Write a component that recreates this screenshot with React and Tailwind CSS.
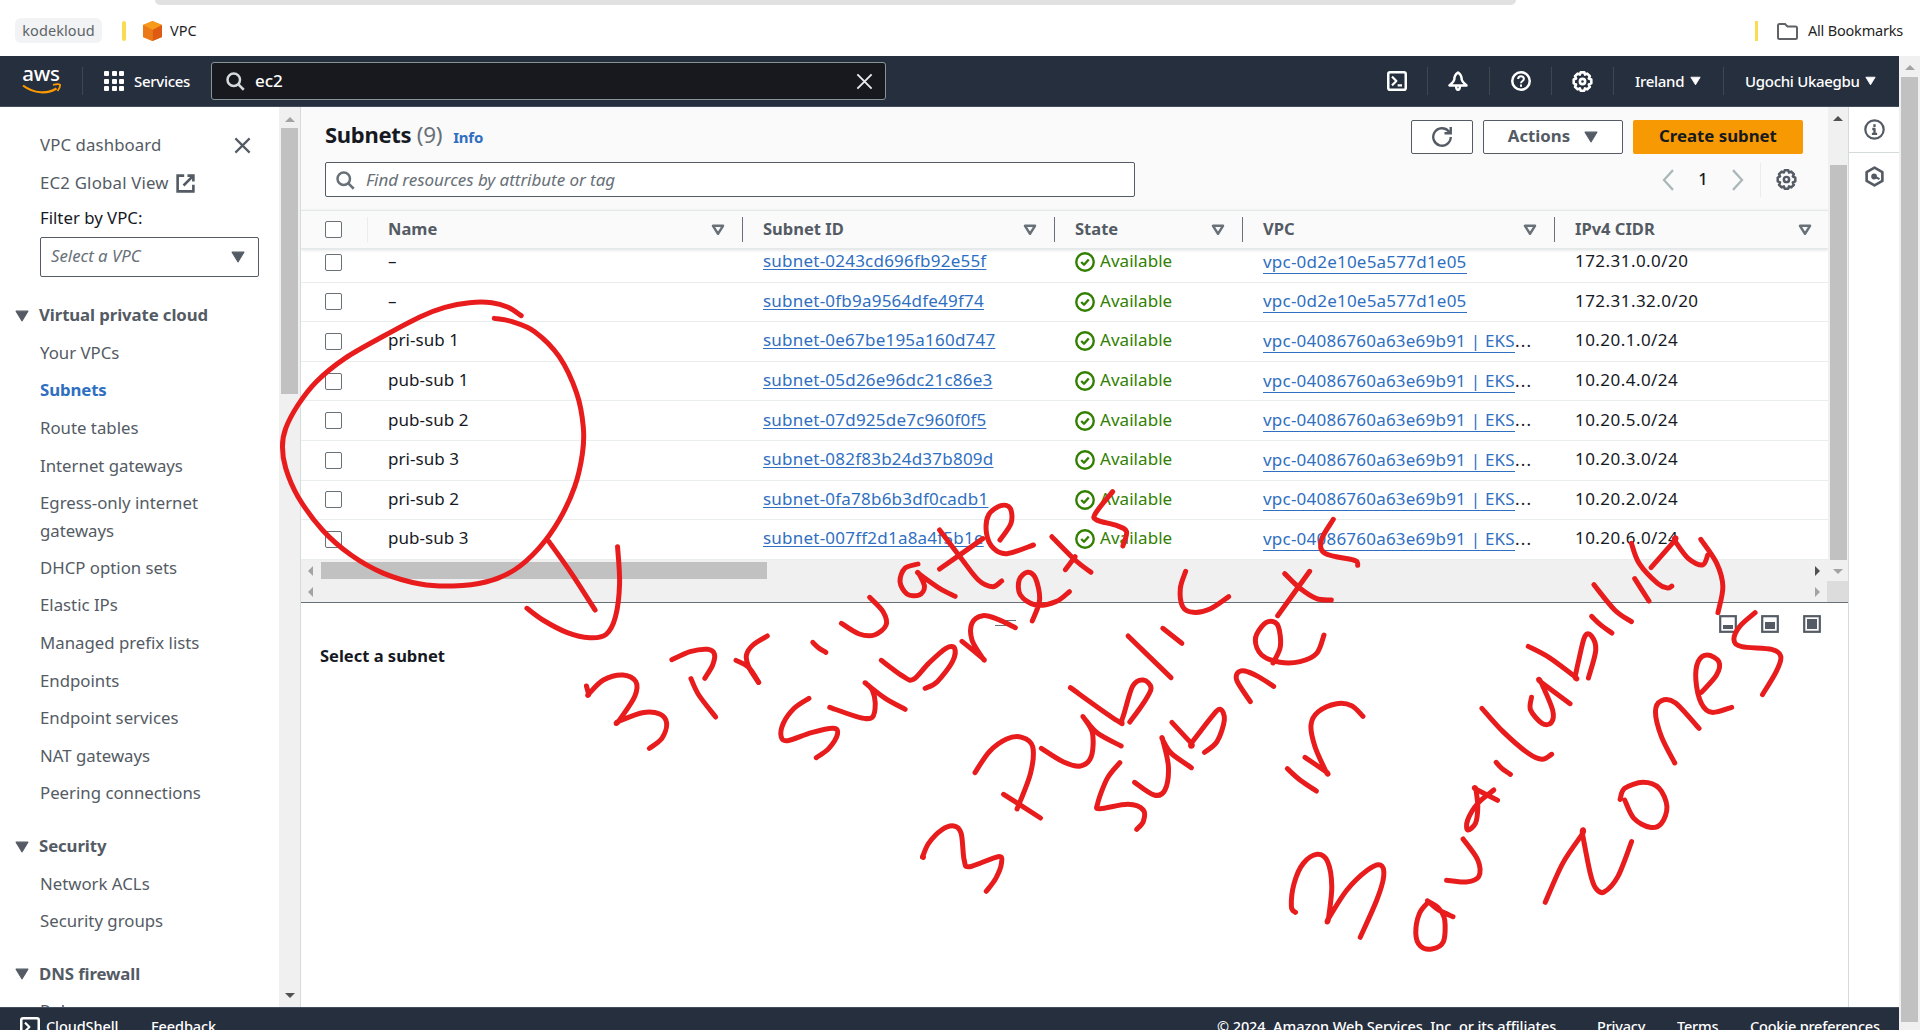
import React from "react";

/* ---------- icons (16px grid, AWS console style) ---------- */
const Svg = ({ s = 20, w = 2, children, className = "", join = "round" }) => (
  <svg width={s} height={s} viewBox="0 0 16 16" fill="none" stroke="currentColor" strokeWidth={w} strokeLinejoin={join} className={"shrink-0 " + className}>
    {children}
  </svg>
);
const SearchIcon = (p) => (
  <Svg {...p}><circle cx="7" cy="7" r="5" /><path d="m15 15-4.5-4.5" /></Svg>
);
const CloseIcon = (p) => (
  <Svg {...p}><path d="m2 2 12 12M14 2 2 14" /></Svg>
);
const ShellIcon = (p) => (
  <Svg {...p}><rect x="1" y="1" width="14" height="14" rx="1.5" /><path d="m4 4.5 3.5 3.5L4 11.5M8.5 11.5H12" strokeWidth="1.7" /></Svg>
);
const BellIcon = (p) => (
  <Svg {...p}><path d="M8 1.2C5.600 2.800 5 4.600 5 7c-.5 2-2.200 3-3.800 4.500h13.600C13.200 10 11.500 9 11 7c0-2.400-.6-4.200-3-5.800zM6.500 12c0 4 3 4 3 0" /></Svg>
);
const HelpIcon = (p) => (
  <Svg {...p}><circle cx="8" cy="8" r="7" /><path d="M5.700 6.400c0-3 4.600-3 4.600 0C10.300 8 8 8 8 9.800M8 10.800v1.700" strokeWidth="1.6" /></Svg>
);
const GearIcon = (p) => (
  <Svg {...p}>
    <path d="M6.600 1h2.800l.5 1.700 1.700-.7 2 2-.8 1.700 1.900.8v2.900l-1.900.8.8 1.800-2 2-1.700-.8-.6 1.800H6.600L6 13.200l-1.700.8-2-2 .8-1.800L1.300 9.400V6.500l1.800-.8L2.300 4l2-2 1.700.7z" />
    <circle cx="8" cy="8" r="2" />
  </Svg>
);
const RefreshIcon = (p) => (
  <Svg {...p} join="miter"><path d="M15 8A7 7 0 1 1 13.300 3.400M15 0v5H10M14.500 4.500 11.500 1.800" /></Svg>
);
const ExternalIcon = (p) => (
  <Svg {...p} join="miter"><path d="M7 2H2v12h12V9M9.500 2H14v4.500M14 2 6.500 9.500" /></Svg>
);
const InfoIcon = (p) => (
  <Svg {...p}><circle cx="8" cy="8" r="7" /><path d="M6.300 7.600H8v3.700M6 11.300h4M8 4v2" strokeWidth="1.8" /></Svg>
);
const HexIcon = (p) => (
  <Svg {...p}><path d="M8 1.200 14 4.600v6.800L8 14.800 2 11.400V4.600z" /><circle cx="7.700" cy="8" r="1.700" fill="currentColor" strokeWidth="1" /><path d="m8 8 3.800 2" strokeWidth="1.600" /></Svg>
);
const CheckIcon = (p) => (
  <Svg {...p}><circle cx="8" cy="8" r="7" /><path d="m5 8 2.200 2.200L11 6" /></Svg>
);
const Caret = ({ w = 13, h = 11, className = "" }) => (
  <svg width={w} height={h} viewBox="0 0 13 11" className={"shrink-0 " + className}>
    <path d="M1 1h11L6.500 10z" fill="currentColor" stroke="currentColor" strokeLinejoin="round" />
  </svg>
);
const FilterCaret = () => (
  <svg width="14" height="12" viewBox="0 0 14 12" className="shrink-0 text-[#687078]">
    <path d="M2 1.800h10L7 9.800z" fill="none" stroke="currentColor" strokeWidth="2.500" strokeLinejoin="round" />
  </svg>
);
const Arrow = ({ dir, dark }) => {
  const d = { up: "M0 6 5 1l5 5z", down: "M0 2l5 5 5-5z", left: "M6 0 1 5l5 5z", right: "M2 0l5 5-5 5z" }[dir];
  return (
    <svg width={dir === "up" || dir === "down" ? 10 : 8} height={dir === "up" || dir === "down" ? 8 : 10} className="shrink-0">
      <path d={d} fill={dark ? "#505050" : "#a3a3a3"} />
    </svg>
  );
};
const PanelIcon = ({ y, x = 4 }) => (
  <svg width="18" height="18" viewBox="0 0 18 18" className="shrink-0">
    <rect x="1.200" y="1.200" width="15.600" height="15.600" fill="white" stroke="#545b64" strokeWidth="2.200" />
    <rect x={x} y={y} width={18 - 2 * x} height={14 - y} fill="#545b64" />
  </svg>
);

/* ---------- data ---------- */
const VPC_A = "vpc-0d2e10e5a577d1e05";
const VPC_B = "vpc-04086760a63e69b91 | EKS";
const rows = [
  ["–", "subnet-0243cd696fb92e55f", VPC_A, "172.31.0.0/20"],
  ["–", "subnet-0fb9a9564dfe49f74", VPC_A, "172.31.32.0/20"],
  ["pri-sub 1", "subnet-0e67be195a160d747", VPC_B, "10.20.1.0/24"],
  ["pub-sub 1", "subnet-05d26e96dc21c86e3", VPC_B, "10.20.4.0/24"],
  ["pub-sub 2", "subnet-07d925de7c960f0f5", VPC_B, "10.20.5.0/24"],
  ["pri-sub 3", "subnet-082f83b24d37b809d", VPC_B, "10.20.3.0/24"],
  ["pri-sub 2", "subnet-0fa78b6b3df0cadb1", VPC_B, "10.20.2.0/24"],
  ["pub-sub 3", "subnet-007ff2d1a8a4f5b1e", VPC_B, "10.20.6.0/24"],
];
const cols = "grid grid-cols-[67px_375px_312px_188px_312px_1fr]";

/* ---------- pen annotations ---------- */
/* Each sheet has an origin and a scale; a repeated point is a sharp corner. */
const sheets = [
  { o: [0, 300], s: [2.45, 3], strokes: [
    "1277,47 1245,22 1205,8 1150,8 1090,22 1030,50 940,108 845,175 775,245 730,315 700,385 692,440 700,505 730,590 790,690 860,765 940,820 1030,852 1110,858 1190,846 1260,810 1320,745 1370,660 1408,560 1427,460 1429,380 1413,280 1370,170 1310,95 1255,65 1211,55",
    "1345,725 1400,820 1458,930",
    "1291,925 1330,960 1390,998 1445,1013 1485,1003 1508,950 1518,850 1513,740",
  ]},
  { o: [560, 580], s: [2.306, 3], strokes: [
    "61,318 66,342 66,342 100,300 145,285 175,305 172,350 135,424 135,424 190,398 230,402 246,430 235,475 206,505",
    "258,239 300,215 340,208 356,222 352,255 334,295",
    "302,296 320,345 359,411",
    "478,168 445,195 430,225 435,260 458,307",
    "406,241 435,262 458,307",
    "583,187 596,203 613,217",
    "714,52 745,95 752,135 725,165 690,162 649,130",
    "574,355 540,385 515,430 510,470 525,482 580,458 630,445 640,462 620,505 591,533",
    "622,382 690,412 720,412 727,370 720,330 707,312 707,312 750,355 796,388",
    "741,241 790,288 815,298 850,250 890,205 910,205 905,245 870,305 842,325",
    "927,184 974,234 974,234 950,180 950,130 975,107 1010,118 1050,143",
    "836,831 850,790 880,750 908,738 925,760 932,840 945,860 1010,830 1018,850 1005,895 983,934",
    "836,831 838,832",
    "957,578 990,515 1030,477 1065,472 1090,500 1085,580 1054,687",
    "1023,643 1108,714",
    "1110,505 1160,545 1200,558 1225,530 1228,460 1209,415 1209,415 1240,460 1294,498",
    "1177,323 1285,422 1297,415 1320,320 1345,300 1363,325 1345,370 1314,426",
    "1310,168 1409,293",
    "1390,145 1434,190",
    "1291,548 1262,595 1240,670 1245,686 1310,673 1345,690 1345,725 1330,748",
    "1325,607 1370,645 1395,630 1403,560 1390,480 1390,480 1410,520 1456,563",
    "1411,427 1456,490 1456,490 1500,415 1522,388 1532,420 1515,485 1486,517",
  ]},
  { o: [560, 300], s: [2.45, 3], strokes: [
    "877,792 845,805 833,845 850,882 880,885 893,860 880,822 880,822 930,865 968,889",
    "930,690 980,770 1025,840 1060,860 1082,843",
    "930,807 1036,716",
    "1078,720 1105,670 1103,625 1080,617 1050,645 1045,700 1062,745 1095,761 1160,735",
    "1157,963 1175,900 1165,835 1145,817 1125,840 1128,885 1165,915 1215,905 1248,875",
    "1205,710 1262,780 1301,817",
    "1238,809 1262,770",
    "1354,575 1312,640 1315,660 1365,677 1388,695 1379,738",
  ]},
  { o: [1100, 460], s: [3, 3], strokes: [
    "257,334 241,385 248,440 280,457 330,447 386,410",
    "451,725 412,665 412,640 435,633 475,650 521,679",
    "519,609 541,560 535,500 512,484 485,500 466,540 485,585 540,607 600,605 650,580 672,525",
    "629,334 533,467",
    "554,341 600,385 650,416 694,420",
    "700,178 664,240 675,280 760,300 772,308 773,316",
    "562,926 600,960 649,993",
    "615,892 678,935 678,935 645,860 633,795 655,755 710,731 755,737 789,769",
  ]},
  { o: [1200, 600], s: [2.178, 3], strokes: [
    "208,937 199,920 205,850 225,790 255,763 278,785 287,860 280,955 280,955 320,870 365,810 393,795 400,830 385,900 349,1012",
    "498,905 478,940 470,1000 480,1038 505,1047 530,1025 533,960 520,925 498,905 498,905 520,930 551,950",
    "573,717 605,780 607,830 580,846 537,841",
    "640,570 605,610 583,660 583,690 600,670 605,620 601,568 601,568 648,601",
    "645,487 658,506 676,523",
    "614,325 660,395 715,460 745,478 766,463",
    "722,292 720,330 745,370 765,368 768,330 743,247 743,247 806,311",
    "715,139 760,172 817,230 817,230 825,180 838,110 852,107 862,150 846,234",
    "853,49 872,74 897,99",
    "1209,38 1175,80 1163,120 1180,140 1245,148 1265,170 1255,215 1225,284",
    "752,907 790,790 833,702 833,702 850,820 862,865 880,876 910,830 940,725",
    "915,598 925,565 965,547 1000,565 1017,620 1005,670 980,682 945,655 925,600",
    "1034,489 1005,410 992,335 1005,302 1035,308 1087,385",
    "1092,277 1125,225 1130,185 1105,165 1085,185 1080,240 1092,310 1115,337 1158,322",
  ]},
  { o: [1280, 300], s: [2.45, 3], strokes: [
    "769,854 820,930 861,965",
    "869,836 904,903",
    "861,730 880,790 925,850 950,864 960,858",
    "909,803 967,722 967,722 1000,775 1035,795 1048,765",
    "1031,718 1070,790 1085,860 1073,938",
  ]},
];

function curve({ o, s }, text) {
  const p = text.split(" ").map((q) => q.split(",").map((v, i) => o[i] + v / s[i]));
  let d = `M${p[0]}`;
  for (let i = 0; i < p.length - 1; i++) {
    const a = p[i - 1] || p[i], b = p[i], c = p[i + 1], e = p[i + 2] || c;
    d += `C${b[0] + (c[0] - a[0]) / 6},${b[1] + (c[1] - a[1]) / 6} ${c[0] - (e[0] - b[0]) / 6},${c[1] - (e[1] - b[1]) / 6} ${c[0]},${c[1]}`;
  }
  return d;
}

const Annotations = () => (
  <svg className="absolute inset-0 pointer-events-none" width="1920" height="1030" fill="none" stroke="#e81c1c" strokeWidth="5" strokeLinecap="round" strokeLinejoin="round">
    {sheets.flatMap((sh, i) => sh.strokes.map((t, j) => <path key={i + "-" + j} d={curve(sh, t)} />))}
  </svg>
);

/* ---------- page parts ---------- */
const BookmarksBar = () => (
  <div className="h-14 shrink-0 bg-white text-[14.5px] text-[#1f1f1f]">
    <div className="ml-[155px] h-[5px] w-[1361px] rounded-b-[12px] bg-[#e1e1e1]" />
    <div className="flex h-[51px] items-start pl-[15px] pr-[18px] pt-[13px]">
      <div className="flex h-[25px] w-[87px] items-center justify-center rounded-md bg-[#f1f3f4] text-[#5f6368]"><span className="tracking-[0.1px]">kodekloud</span></div>
      <div className="ml-5 mt-[3px] h-5 w-[4px] rounded-sm bg-[#fbdb52]" />
      <svg width="19" height="20" viewBox="0 0 19 20" className="ml-[17px] mt-[3px] shrink-0">
        <path d="M9.500 0 19 4v12l-9.500 4L0 16V4z" fill="#ef8216" />
        <path d="M9.500 0 19 4 9.500 9 0 4z" fill="#f79a1c" />
        <path d="M19 4v12l-9.500 4V9z" fill="#dd5b12" />
        <path d="M0 4v12l9.500 4V9z" fill="#ea7a17" />
      </svg>
      <span className="ml-[8px] mt-[2px]">VPC</span>
      <div className="ml-auto mt-[3px] h-5 w-[3px] bg-[#fbdb52]" />
      <svg width="21" height="17" viewBox="0 0 21 17" fill="none" stroke="#5f6368" strokeWidth="2" className="ml-[19px] mt-[5px] shrink-0">
        <path d="M1 2.500Q1 1 2.500 1H8l2.500 2.500h8Q20 3.500 20 5v9.500q0 1.500-1.500 1.500h-16Q1 16 1 14.500z" />
      </svg>
      <span className="ml-[10px] mt-[2px] w-[94px] whitespace-nowrap tracking-[-0.2px]">All Bookmarks</span>
    </div>
  </div>
);

const Divider = () => <div className="h-7 w-px bg-[#414750]" />;

const Header = () => (
  <header className="flex h-[51px] shrink-0 items-center border-b border-[#414d5c] bg-[#262f3e] text-[15px] text-white">
    <div className="ml-[22px] flex w-10 flex-col items-center">
      <span className="h-[17px] pr-[2px] text-[20.500px] font-medium leading-[13px] tracking-[-0.2px]">aws</span>
      <svg width="40" height="12" viewBox="0 0 40 12" fill="none" stroke="#f90" strokeWidth="2.200" className="-mt-[1px]">
        <path d="M1 2.500C12 11 26 11 34.500 5.500" />
        <path d="M31 1.800q6-1.500 7 0 .5 2.500-2.500 6.200" strokeWidth="1.800" />
      </svg>
    </div>
    <div className="ml-[20px]"><div className="h-7 w-px bg-[#414750]" /></div>
    <div className="ml-[21px] grid grid-cols-[5px_5px_5px] gap-[2.500px]">
      {Array.from({ length: 9 }, (_, i) => <i key={i} className="size-[5px] rounded-[1px] bg-white" />)}
    </div>
    <span className="ml-[10px] w-[56px] whitespace-nowrap font-medium tracking-[-0.3px]">Services</span>
    <div className="ml-[21px] flex h-[38px] w-[675px] items-center rounded-[3px] border border-[#879596] bg-[#17191e] pl-[13px] pr-[11px]">
      <SearchIcon s={20} className="text-[#d5dbdb]" />
      <span className="ml-[10px] text-[17px] font-medium">ec2</span>
      <CloseIcon s={19} w={1.600} className="ml-auto text-[#e9ebed]" />
    </div>
    <div className="ml-auto flex items-center">
      <ShellIcon /><div className="ml-5 mr-[20px]"><Divider /></div>
      <BellIcon /><div className="mx-[21px]"><Divider /></div>
      <HelpIcon /><div className="mx-5"><Divider /></div>
      <GearIcon s={21} /><div className="mx-[20px]"><Divider /></div>
      <span className="ml-[1px] w-[47px] whitespace-nowrap font-medium tracking-[-0.3px]">Ireland</span>
      <Caret w={11} h={10} className="ml-[8px]" />
      <div className="ml-[22px] mr-[21px]"><Divider /></div>
      <span className="w-[112px] whitespace-nowrap font-medium tracking-[-0.3px]">Ugochi Ukaegbu</span>
      <Caret w={11} h={10} className="ml-[8px] mr-[23px]" />
    </div>
  </header>
);

const NavItem = ({ children, active }) => (
  <div className={"flex h-[37.600px] items-center whitespace-nowrap pl-10 " + (active ? "font-bold tracking-[-0.1px] text-[#2f6fc1]" : "")}>{children}</div>
);
const NavHead = ({ children, className }) => (
  <div className={"flex h-[37.600px] items-center pl-[15px] text-[#545b64] " + className}>
    <Caret w={14} h={12} className="mr-[10px] mt-[2px]" />
    <span className="font-bold tracking-[-0.1px]">{children}</span>
  </div>
);

const Sidebar = () => (
  <aside className="flex w-[300px] shrink-0 overflow-hidden">
    <div className="w-[279px] text-[16.800px] text-[#545b64]">
      <div className="mt-[19px] flex h-[38px] items-center pl-10"><span className="tracking-[0.1px]">VPC dashboard</span><CloseIcon s={19} w={1.800} className="ml-auto mr-[27px]" /></div>
      <div className="flex h-[38px] items-center pl-10"><span className="w-[130px] whitespace-nowrap tracking-[0.2px]">EC2 Global View</span><ExternalIcon s={21} className="ml-[5px]" /></div>
      <div className="flex h-[32px] items-center pl-10 text-[#16191f]">Filter by VPC:</div>
      <div className="ml-10 mt-[3px] flex h-[40px] w-[219px] items-center rounded-[2px] border border-[#545b64] bg-white pl-[10px] pr-[13px] italic text-[#687078]">
        <span className="-mt-[3px]">Select a VPC</span><Caret w={14} h={12} className="ml-auto text-[#545b64]" />
      </div>
      <NavHead className="mt-[19px]">Virtual private cloud</NavHead>
      <NavItem>Your VPCs</NavItem>
      <NavItem active>Subnets</NavItem>
      <NavItem>Route tables</NavItem>
      <NavItem>Internet gateways</NavItem>
      <div className="pl-10 pt-[5px] leading-[28px]">Egress-only internet<br />gateways</div>
      <div className="h-[3.600px]" />
      {["DHCP option sets", "Elastic IPs", "Managed prefix lists", "Endpoints", "Endpoint services", "NAT gateways", "Peering connections"].map((t) => <NavItem key={t}>{t}</NavItem>)}
      <NavHead className="mt-[15px]">Security</NavHead>
      <NavItem>Network ACLs</NavItem>
      <NavItem>Security groups</NavItem>
      <NavHead className="mt-[15px]">DNS firewall</NavHead>
      <NavItem>Rule groups</NavItem>
    </div>
    <div className="flex w-[21px] flex-col items-center bg-[#f0f0f0]">
      <div className="flex h-[21px] items-center pt-1"><Arrow dir="up" /></div>
      <div className="h-[266px] w-[17px] bg-[#c1c1c1]" />
      <div className="mt-auto mb-[8px] flex"><Arrow dir="down" dark /></div>
    </div>
  </aside>
);

const Checkbox = () => <div className="ml-6 size-[17px] rounded-[2px] border border-[#687078] bg-white" />;

const HeadCell = ({ children, last }) => (
  <div className={"flex h-[25px] items-center border-[#687078] " + (last ? "pl-[20px] pr-[16px]" : "border-r pl-[20px] pr-[17px]")}>
    <span className="mr-auto whitespace-nowrap font-bold">{children}</span><FilterCaret />
  </div>
);

const Table = () => (
  <div className="flex h-[453px] shrink-0">
    <div className="flex w-[1527px] flex-col overflow-hidden">
      <div className="h-[103px] shrink-0 bg-[#fafafa]">
        <div className="flex h-[55px] items-center pl-6 pr-[25px] pt-[5px]">
          <h1 className="-mt-[5px] text-[22px] font-bold tracking-[-0.3px] text-[#16191f]">Subnets <span className="text-[22.500px] font-normal text-[#687078]">(9)</span></h1>
          <span className="ml-[11px] text-[15px] font-bold tracking-[-0.2px] text-[#2f6fc1]">Info</span>
          <div className="ml-auto flex h-[34px] w-[62px] items-center justify-center rounded-[2px] border border-[#545b64] bg-white text-[#545b64]"><RefreshIcon s={20} w={1.900} /></div>
          <div className="ml-[10px] flex h-[34px] w-[140px] items-center justify-center gap-[14px] rounded-[2px] border border-[#545b64] bg-white pb-[2px] text-[16.800px] font-bold text-[#545b64]">Actions<Caret w={14} h={12} className="mt-[2px]" /></div>
          <div className="ml-[10px] flex h-[34px] w-[170px] items-center justify-center rounded-[2px] bg-[#f79902] pb-[2px] text-[16.800px] font-bold text-[#16191f]">Create subnet</div>
        </div>
        <div className="flex items-center pl-6 pr-[31px]">
          <div className="flex h-[35px] w-[810px] items-center rounded-[2px] border border-[#545b64] bg-white pl-[9px] text-[#687078]">
            <SearchIcon s={20} /><span className="ml-[11px] text-[17px] italic tracking-[-0.05px]">Find resources by attribute or tag</span>
          </div>
          <svg width="13" height="22" viewBox="0 0 13 20" preserveAspectRatio="none" fill="none" stroke="#aab7b8" strokeWidth="2.200" className="ml-auto"><path d="M11 1 2 10l9 9" /></svg>
          <span className="w-[56px] text-center text-[16.500px] font-medium text-[#16191f]">1</span>
          <svg width="13" height="22" viewBox="0 0 13 20" preserveAspectRatio="none" fill="none" stroke="#aab7b8" strokeWidth="2.200"><path d="m2 1 9 9-9 9" /></svg>
          <div className="ml-[16px] h-[34px] w-px bg-[#eaeded]" />
          <GearIcon s={21} w={1.900} className="ml-[15px] text-[#545b64]" />
        </div>
      </div>
      <div className={cols + " relative z-10 h-[39px] shrink-0 items-center border-y border-[#e3e8e8] bg-[#fafafa] text-[16.500px] text-[#545b64] shadow-[0_1px_3px_rgba(0,28,36,0.15)]"}>
        <div className="flex h-[25px] items-center border-r border-[#eaeded]"><Checkbox /></div>
        <HeadCell>Name</HeadCell>
        <HeadCell>Subnet ID</HeadCell>
        <HeadCell>State</HeadCell>
        <HeadCell>VPC</HeadCell>
        <HeadCell last>IPv4 CIDR</HeadCell>
      </div>
      <div className="-mt-[6px] flex flex-col text-[17px] leading-[24px] text-[#16191f]">
        {rows.map(([name, id, vpc, cidr]) => (
          <div key={id} className={cols + " h-[39.600px] shrink-0 items-center whitespace-nowrap border-b border-[#eaeded]"}>
            <Checkbox />
            <span className="pb-[2px] pl-[20px] tracking-[0.05px]">{name}</span>
            <span className="pb-[2px] pl-[20px] tracking-[0.22px]"><a className="text-[#2f6fc1] underline decoration-1 underline-offset-[2px]">{id}</a></span>
            <span className="flex items-center gap-[5px] pl-[20px] text-[#318000]"><CheckIcon s={20} w={1.900} /><span className="pb-[2px] tracking-[0.05px]">Available</span></span>
            <span className="pb-px pl-[20px] tracking-[0.22px]"><a className="inline-block h-[23px] border-b border-[#2f6fc1] leading-[21px] text-[#2f6fc1]">{vpc}</a>{vpc === VPC_B && <span className="tracking-[1.300px]">...</span>}</span>
            <span className="pb-[2px] pl-[20px] tracking-[0.45px]">{cidr}</span>
          </div>
        ))}
      </div>
    </div>
    <div className="flex w-[20px] flex-col items-center bg-[#f0f0f0]">
      <div className="flex h-[58px] pt-2"><Arrow dir="up" dark /></div>
      <div className="w-[17px] flex-1 bg-[#c1c1c1]" />
    </div>
  </div>
);

const HorizontalScrollbars = () => (
  <div className="h-[43px] shrink-0 border-b border-[#687078] bg-[#f0f0f0]">
    <div className="flex h-[21px] items-center pl-[6px]">
      <Arrow dir="left" /><div className="ml-[6px] h-[17px] w-[446px] bg-[#c1c1c1]" />
      <div className="ml-auto mr-[10px] flex w-[10px]"><Arrow dir="right" dark /></div>
      <div className="mr-[5px] flex w-[10px]"><Arrow dir="down" /></div>
    </div>
    <div className="flex h-[21px] items-center pl-[6px]">
      <Arrow dir="left" />
      <div className="ml-auto mr-[6px] flex w-[8px]"><Arrow dir="right" /></div>
      <div className="h-[21px] w-[21px] bg-[#dcdcdc]" />
    </div>
  </div>
);

const Main = () => (
  <main className="flex w-[1549px] shrink-0 flex-col border-x border-[#d5dbdb] bg-white">
    <Table />
    <HorizontalScrollbars />
    <div className="flex items-start pl-[694px] pr-[27px] pt-[12px]">
      <div className="mt-[5px] h-[6px] w-[21px] border-y border-[#687078]" />
      <div className="ml-auto flex gap-[24px]"><PanelIcon y={10} /><PanelIcon y={7} /><PanelIcon y={4} /></div>
    </div>
    <h2 className="mt-[11px] pl-[19px] text-[16.500px] font-bold text-[#16191f]">Select a subnet</h2>
  </main>
);

const ToolRail = () => (
  <div className="flex flex-1 flex-col items-center bg-white text-[#545b64]">
    <div className="flex h-[46px] w-full items-center justify-center border-b border-[#d5dbdb]"><InfoIcon s={21} w={1.700} /></div>
    <div className="flex h-[46px] items-center"><HexIcon s={21} /></div>
  </div>
);

const Footer = () => (
  <footer className="flex h-[23px] shrink-0 overflow-hidden border-t border-[#414d5c] bg-[#262f3e] text-[14.500px] font-medium text-white">
    <div className="mt-[8px] flex h-[22px] w-full items-center whitespace-nowrap pr-[20px] tracking-[-0.2px]">
      <ShellIcon s={20} className="ml-5 mr-[6px]" /><span className="w-[73px] tracking-[-0.1px]">CloudShell</span>
      <span className="ml-[32px] tracking-[-0.1px]">Feedback</span>
      <span className="ml-auto w-[341px] tracking-[-0.08px]">© 2024, Amazon Web Services, Inc. or its affiliates.</span>
      <span className="ml-[39px] w-[49px]">Privacy</span>
      <span className="ml-[31px] w-[41px]">Terms</span>
      <span className="ml-[32px] w-[129px]">Cookie preferences</span>
    </div>
  </footer>
);

export default function App() {
  return (
    <div className="relative flex h-[1030px] w-[1920px] flex-col overflow-hidden bg-white font-['Noto_Sans','Open_Sans',sans-serif]">
      <BookmarksBar />
      <div className="flex min-h-0 flex-1">
        <div className="flex w-[1899px] flex-col">
          <Header />
          <div className="flex min-h-0 flex-1">
            <Sidebar />
            <Main />
            <ToolRail />
          </div>
          <Footer />
        </div>
        <div className="flex w-[21px] flex-col items-center bg-[#f0f0f0]">
          <div className="flex h-[21px] pt-2"><Arrow dir="up" /></div>
          <div className="h-[945px] w-[17px] bg-[#c1c1c1]" />
        </div>
      </div>
      <Annotations />
    </div>
  );
}
